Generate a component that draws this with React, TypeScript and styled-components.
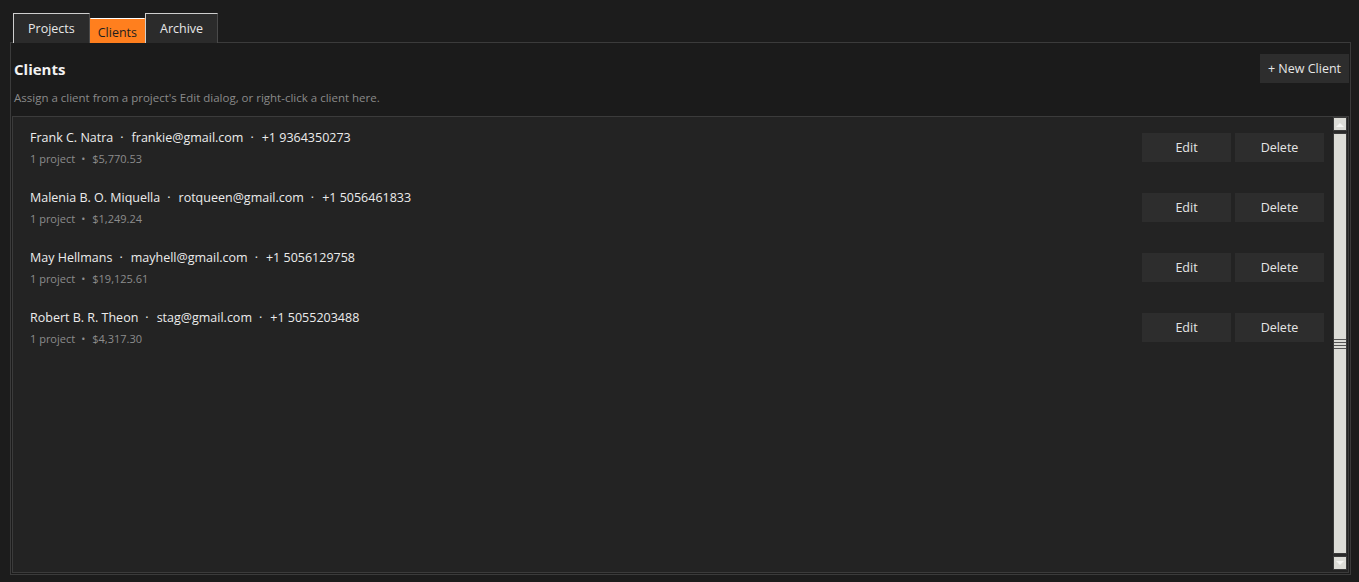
import React from "react";
import styled, { createGlobalStyle } from "styled-components";

const GlobalStyle = createGlobalStyle`
  html, body {
    margin: 0;
    background: #1c1c1c;
    font-family: "Open Sans", "Noto Sans", "DejaVu Sans", sans-serif;
    color: #e8e8e8;
  }
  * { box-sizing: border-box; }
`;

const Page = styled.div`
  height: 582px;
  padding: 12px 8px 7px 10px;
  display: flex;
  flex-direction: column;
`;

const TabBar = styled.div`
  display: flex;
  align-items: flex-end;
  height: 31px;
  padding-left: 3px;
  margin-bottom: -1px;
  position: relative;
  z-index: 1;
`;

const Tab = styled.div<{ $active?: boolean }>`
  display: flex;
  align-items: center;
  justify-content: center;
  height: ${(p) => (p.$active ? "25px" : "30px")};
  padding: ${(p) => (p.$active ? "3px 7px 0" : "0 14px 0")};
  font-size: 12.5px;
  background: ${(p) => (p.$active ? "#ff7f1e" : "#2b2b2b")};
  color: ${(p) => (p.$active ? "#1e1e1e" : "#e8e8e8")};
  border-top: 1px solid ${(p) => (p.$active ? "#ffffff" : "#cfcfcf")};
  border-left: 1px solid ${(p) => (p.$active ? "#ff7f1e" : "#cfcfcf")};
  border-right: 1px solid ${(p) => (p.$active ? "#ff7f1e" : "#4a4a4a")};
`;

const Frame = styled.div`
  flex: 1;
  display: flex;
  flex-direction: column;
  border: 1px solid #3b3b3b;
  background: #1b1b1b;
  padding: 0 1px 1px 1px;
`;

const Header = styled.div`
  display: flex;
  justify-content: space-between;
  align-items: center;
  padding: 11px 0 0 2px;
`;

const Title = styled.div`
  font-size: 15px;
  font-weight: 700;
  color: #f2f2f2;
`;

const Hint = styled.div`
  font-size: 11.5px;
  color: #8a8a8a;
  padding: 7px 0 0 2px;
  height: 33px;
`;

const Button = styled.button`
  width: 89px;
  height: 29px;
  border: none;
  background: #2d2d2d;
  color: #e6e6e6;
  font-family: inherit;
  font-size: 12.5px;
  padding: 0;
`;

const List = styled.div`
  flex: 1;
  display: flex;
  border: 1px solid #3b3b3b;
  background: #232323;
  padding: 0 1px 2px 0;
`;

const Rows = styled.div`
  flex: 1;
  display: flex;
  flex-direction: column;
`;

const Row = styled.div`
  height: 60px;
  display: flex;
  align-items: center;
  justify-content: space-between;
  padding: 0 9px 0 17px;
`;

const Info = styled.div`
  display: flex;
  flex-direction: column;
  padding-top: 2px;
`;

const MainLine = styled.div`
  font-size: 12.5px;
  line-height: 20px;
  color: #ececec;
`;

const SubLine = styled.div`
  font-size: 11px;
  line-height: 20px;
  margin-top: 1px;
  color: #8c8c8c;
`;

const Sep = styled.span<{ $left: number; $right: number }>`
  margin: 0 ${(p) => p.$right}px 0 ${(p) => p.$left}px;
`;

const Actions = styled.div`
  display: flex;
  gap: 4px;
`;

const Scrollbar = styled.div`
  width: 14px;
  display: flex;
  flex-direction: column;
  gap: 2px;
  background: #2a2a2a;
`;

const ArrowBtn = styled.div`
  height: 14px;
  background: #dcdcd7;
  border: 1px solid #3a3a3a;
  display: flex;
  align-items: center;
  justify-content: center;
`;

const Thumb = styled.div`
  flex: 1;
  background: #dcdcd7;
  border: 1px solid #3a3a3a;
  display: flex;
  flex-direction: column;
  align-items: stretch;
  justify-content: center;
  gap: 2px;
`;

const Grip = styled.div`
  height: 1px;
  background: #555;
`;

const clients = [
  { name: "Frank C. Natra", email: "frankie@gmail.com", phone: "+1 9364350273", total: "$5,770.53" },
  { name: "Malenia B. O. Miquella", email: "rotqueen@gmail.com", phone: "+1 5056461833", total: "$1,249.24" },
  { name: "May Hellmans", email: "mayhell@gmail.com", phone: "+1 5056129758", total: "$19,125.61" },
  { name: "Robert B. R. Theon", email: "stag@gmail.com", phone: "+1 5055203488", total: "$4,317.30" },
];

const Arrow = ({ up }: { up?: boolean }) => (
  <svg width="8" height="5" viewBox="0 0 8 5">
    <path d={up ? "M0 5 L4 1 L8 5 Z" : "M0 0 L4 4 L8 0 Z"} fill="#f4f4f2" />
  </svg>
);

export default function App() {
  return (
    <Page>
      <GlobalStyle />
      <TabBar>
        <Tab>Projects</Tab>
        <Tab $active>Clients</Tab>
        <Tab>Archive</Tab>
      </TabBar>
      <Frame>
        <Header>
          <Title>Clients</Title>
          <Button>+ New Client</Button>
        </Header>
        <Hint>Assign a client from a project's Edit dialog, or right-click a client here.</Hint>
        <List>
          <Rows>
            {clients.map((c) => (
              <Row key={c.name}>
                <Info>
                  <MainLine>
                    {c.name}
                    <Sep $left={7} $right={8}>·</Sep>
                    {c.email}
                    <Sep $left={7} $right={8}>·</Sep>
                    {c.phone}
                  </MainLine>
                  <SubLine>
                    1 project<Sep $left={6} $right={7}>•</Sep>
                    {c.total}
                  </SubLine>
                </Info>
                <Actions>
                  <Button>Edit</Button>
                  <Button>Delete</Button>
                </Actions>
              </Row>
            ))}
          </Rows>
          <Scrollbar>
            <ArrowBtn>
              <Arrow up />
            </ArrowBtn>
            <Thumb>
              <Grip />
              <Grip />
              <Grip />
              <Grip />
            </Thumb>
            <ArrowBtn>
              <Arrow />
            </ArrowBtn>
          </Scrollbar>
        </List>
      </Frame>
    </Page>
  );
}
